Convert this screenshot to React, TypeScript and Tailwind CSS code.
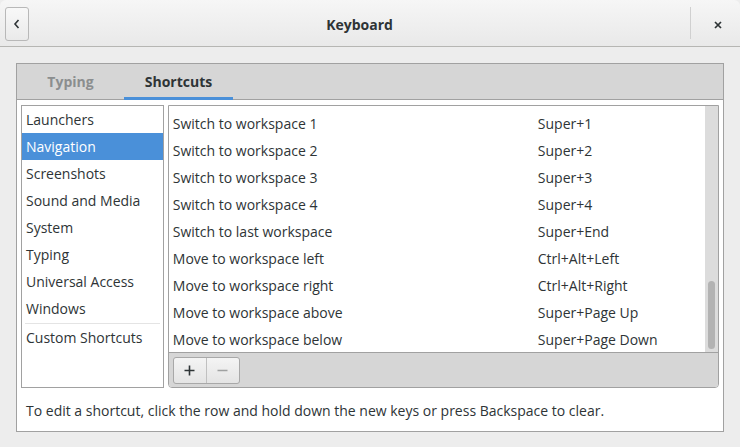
const categories = [
  'Launchers',
  'Navigation',
  'Screenshots',
  'Sound and Media',
  'System',
  'Typing',
  'Universal Access',
  'Windows',
]

const shortcuts = [
  ['Switch to workspace 1', 'Super+1'],
  ['Switch to workspace 2', 'Super+2'],
  ['Switch to workspace 3', 'Super+3'],
  ['Switch to workspace 4', 'Super+4'],
  ['Switch to last workspace', 'Super+End'],
  ['Move to workspace left', 'Ctrl+Alt+Left'],
  ['Move to workspace right', 'Ctrl+Alt+Right'],
  ['Move to workspace above', 'Super+Page Up'],
  ['Move to workspace below', 'Super+Page Down'],
]

const App = () => {
  return (
    <div
      className="w-[740px] h-[447px] bg-[#ededed] text-[14px] leading-[18px] text-[#2e3436] flex flex-col overflow-hidden"
      style={{ fontFamily: '"Open Sans", "Noto Sans", sans-serif' }}
    >
      {/* header bar */}
      <div className="h-[47px] shrink-0 flex items-center rounded-t-[6px] border-b border-[#b6b6b3] bg-gradient-to-b from-[#f6f6f6] to-[#e9e9e9]">
        <button className="ml-[5px] mt-[1px] w-[24px] h-[34px] rounded-[3px] border border-[#b8b8b8] bg-gradient-to-b from-[#f8f8f8] to-[#eaeaea] flex items-center justify-center">
          <svg width="10" height="12" viewBox="0 0 10 12">
            <path d="M6.5 2 L3 6 L6.5 10" fill="none" stroke="#2e3436" strokeWidth="1.6" />
          </svg>
        </button>
        <div className="flex-1 text-center font-bold pt-[3px]">Keyboard</div>
        <div className="w-px h-[32px] bg-[#d0d0d0]" />
        <div className="w-[49px] flex items-center justify-center pl-[4px] pt-[3px]">
          <svg width="10" height="10" viewBox="0 0 10 10">
            <path d="M2 2 L8 8 M8 2 L2 8" stroke="#2e3436" strokeWidth="1.7" />
          </svg>
        </div>
      </div>

      {/* notebook */}
      <div className="mt-[16px] ml-[16px] w-[708px] h-[369px] border border-[#a1a1a1] bg-white flex flex-col">
        <div className="h-[36px] shrink-0 bg-[#d6d6d6] border-b border-[#a1a1a1] flex items-stretch">
          <div className="w-[107px] flex items-center justify-center pt-[1px] font-bold text-[#8b8e8f]">Typing</div>
          <div className="w-[109px] flex items-center justify-center pt-[1px] font-bold relative">
            Shortcuts
            <div className="absolute left-0 right-0 bottom-[-1px] h-[3px] bg-[#4a90d9]" />
          </div>
        </div>

        <div className="flex gap-[4px] px-[4px] pt-[5px]">
          {/* categories */}
          <div className="w-[143px] h-[283px] border border-[#a1a1a1] flex flex-col">
            {categories.map((c) => (
              <div
                key={c}
                className={`h-[27px] shrink-0 flex items-center px-[4px] pt-[1px] ${
                  c === 'Navigation' ? 'bg-[#4a90d9] text-white' : ''
                }`}
              >
                {c}
              </div>
            ))}
            <div className="mx-[3px] mt-[1px] h-px bg-[#e4e4e4]" />
            <div className="h-[27px] flex items-center px-[4px] pt-[1px]">Custom Shortcuts</div>
          </div>

          {/* shortcuts */}
          <div className="w-[552px] h-[283px] border border-[#a1a1a1] rounded-b-[4px] flex flex-col overflow-hidden">
            <div className="flex flex-1 min-h-0">
              <div className="flex-1 flex flex-col pt-[4px]">
                {shortcuts.map(([name, key]) => (
                  <div key={name} className="h-[27px] shrink-0 flex items-center px-[4px]">
                    <div className="w-[365px]">{name}</div>
                    <div>{key}</div>
                  </div>
                ))}
              </div>
              <div className="w-[13px] bg-[#dcdcdc] flex flex-col justify-end items-center pb-[3px]">
                <div className="w-[7px] h-[68px] rounded-full bg-[#b3b3b3]" />
              </div>
            </div>
            <div className="h-[35px] shrink-0 bg-[#d6d6d6] border-t border-[#a1a1a1] flex items-center px-[4px]">
              <div className="flex h-[27px] rounded-[3px] border border-[#a8a8a8] bg-gradient-to-b from-[#f4f4f4] to-[#e4e4e4]">
                <div className="w-[33px] flex items-center justify-center border-r border-[#c0c0c0]">
                  <svg width="11" height="11" viewBox="0 0 11 11">
                    <path d="M5.5 0.5 V10.5 M0.5 5.5 H10.5" stroke="#2e3436" strokeWidth="1.6" />
                  </svg>
                </div>
                <div className="w-[32px] flex items-center justify-center">
                  <svg width="11" height="11" viewBox="0 0 11 11">
                    <path d="M0.5 5.5 H10.5" stroke="#9fa1a1" strokeWidth="1.4" />
                  </svg>
                </div>
              </div>
            </div>
          </div>
        </div>

        <div className="px-[9px] pt-[14px]">
          To edit a shortcut, click the row and hold down the new keys or press Backspace to clear.
        </div>
      </div>
    </div>
  )
}

export default App
